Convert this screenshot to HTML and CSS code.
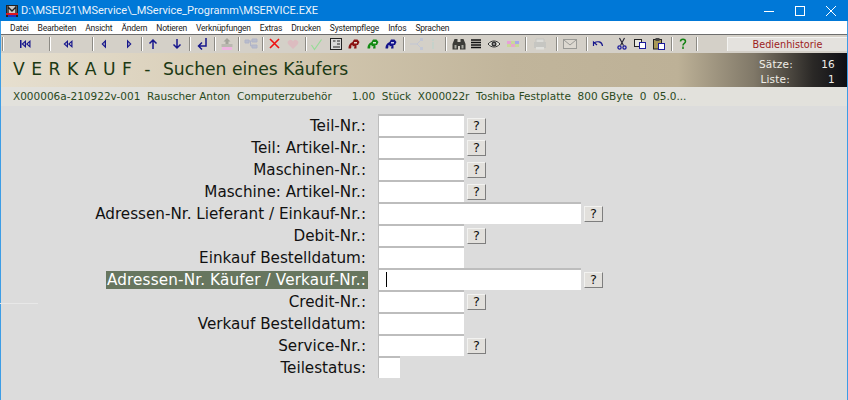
FILE: index.html
```html
<!DOCTYPE html>
<html lang="de">
<head>
<meta charset="utf-8">
<title>MSERVICE</title>
<link rel="stylesheet" href="styles.css">
</head>
<body>
<div class="window">
  <header class="titlebar">
    <svg class="appicon" width="12" height="12" viewBox="0 0 12 12"><rect width="12" height="12" fill="#222"/><rect x="1" y="1" width="10" height="7" fill="#c9c9c9"/><path d="M2 1v7M10 1v7M2 2l4 4 4-4" stroke="#222" stroke-width="1.4" fill="none"/><rect x="0" y="8" width="12" height="2" fill="#e0141c"/><rect x="2" y="10" width="8" height="2" fill="#2430c0"/></svg>
    <span class="titletext">D:\MSEU21\MService\_MService_Programm\MSERVICE.EXE</span>
    <div class="winbtns">
      <svg width="10" height="10" viewBox="0 0 10 10"><path d="M0 5.5h10" stroke="#fff"/></svg>
      <svg width="10" height="10" viewBox="0 0 10 10"><rect x=".5" y=".5" width="9" height="9" fill="none" stroke="#fff"/></svg>
      <svg width="10" height="10" viewBox="0 0 10 10"><path d="M0 0l10 10M10 0L0 10" stroke="#fff"/></svg>
    </div>
  </header>
  <nav class="menubar">
    <span>Datei</span><span>Bearbeiten</span><span>Ansicht</span><span>Ändern</span><span>Notieren</span><span>Verknüpfungen</span><span>Extras</span><span>Drucken</span><span>Systempflege</span><span>Infos</span><span>Sprachen</span>
  </nav>
  <div class="toolbar">
    <i class="sep"></i>
    <svg class="ic" viewBox="0 0 16 16"><path class="navy" d="M3 4h1.500v8H3zM9 4v8L4.500 8zM13.500 4v8L9 8z"/><path class="hole" d="M7.800 6.500v3L6.200 8zM12.300 6.500v3L10.700 8z"/></svg>
    <i class="sep"></i>
    <svg class="ic" viewBox="0 0 16 16"><path class="navy" d="M8 4v8L3.500 8zM12.500 4v8L8 8z"/><path class="hole" d="M6.800 6.500v3L5.200 8zM11.300 6.500v3L9.700 8z"/></svg>
    <i class="sep"></i>
    <svg class="ic" viewBox="0 0 16 16"><path class="navy" d="M10 3.500v9L5.500 8z"/><path class="hole" d="M8.700 6.300v3.400L7.200 8z"/></svg>
    <svg class="ic" viewBox="0 0 16 16"><path class="navy" d="M6 3.500v9L10.500 8z"/><path class="hole" d="M7.300 6.300v3.400L8.800 8z"/></svg>
    <i class="sep"></i>
    <svg class="ic" viewBox="0 0 16 16"><path class="navyline" d="M8 13V4M4.500 7.500L8 4l3.500 3.500"/></svg>
    <svg class="ic" viewBox="0 0 16 16"><path class="navyline" d="M8 3v9M4.500 8.500L8 12l3.500-3.500"/></svg>
    <i class="sep"></i>
    <svg class="ic" viewBox="0 0 16 16"><path class="navyline" d="M12 2v8H5M8 6.500L4.500 10 8 13.500"/></svg>
    <i class="sep"></i>
    <svg class="ic" viewBox="0 0 16 16"><path d="M8 2l3.500 3.500H9.500V9h-3V5.500h-2z" fill="#a4a49c"/><path d="M2.500 8h11v3h-11z" fill="#bab8b0"/><path d="M3 11h10v3H3z" fill="#eeb4e0"/></svg>
    <i class="sep"></i>
    <svg class="ic" viewBox="0 0 16 16"><path d="M2 4h4v3H2zM9 3h5v3H9zM9 9h5v3H9zM6 5h3M7.500 5v5H9" fill="#b8bccc" stroke="#b0b4c8"/></svg>
    <i class="sep"></i>
    <svg class="ic" viewBox="0 0 16 16"><path d="M3 3l9 9M12 3l-9 9" stroke="#ee1111" stroke-width="1.600" fill="none"/></svg>
    <svg class="ic" viewBox="0 0 16 16"><path d="M8 13L3 8a2.600 2.600 0 0 1 5-2.500A2.600 2.600 0 0 1 13 8z" fill="#dcbcc0"/></svg>
    <i class="sep"></i>
    <svg class="ic" viewBox="0 0 16 16"><path d="M2.500 9l3 4.500 7-10" stroke="#96dc96" stroke-width="1.200" fill="none"/></svg>
    <svg class="ic" viewBox="0 0 16 16"><rect x="2.500" y="2.500" width="11" height="11" fill="#d8d8d8" stroke="#222"/><path d="M5 5h2.500M9 5h3M9 8h3M5 11h7" stroke="#222"/></svg>
    <svg class="ic" viewBox="0 0 16 16"><path d="M2.500 12.500C2.500 8 5 7 6.500 6L8 3.500h3.500l2 2.500-1.500 3h-1.500v3.500H8l.5-2.500-3 .5-.5 2z" fill="#8a1414"/><path d="M8 6h3v1.500H8zM5 9.500h2v1H5z" fill="#e4d8cc"/></svg>
    <svg class="ic" viewBox="0 0 16 16"><path d="M2.500 12.500C2.500 8 5 7 6.500 6L8 3.500h3.500l2 2.500-1.500 3h-1.500v3.500H8l.5-2.500-3 .5-.5 2z" fill="#128a14"/><path d="M8 6h3v1.500H8zM5 9.500h2v1H5z" fill="#dcecd0"/></svg>
    <svg class="ic" viewBox="0 0 16 16"><path d="M2.500 12.500C2.500 8 5 7 6.500 6L8 3.500h3.500l2 2.500-1.500 3h-1.500v3.500H8l.5-2.500-3 .5-.5 2z" fill="#14148a"/><path d="M8 6h3v1.500H8zM5 9.500h2v1H5z" fill="#d0d0ec"/></svg>
    <i class="sep"></i>
    <svg class="ic" viewBox="0 0 16 16"><path d="M1 8h7l4-4M8 8l4 4" stroke="#c2c6d4" fill="none"/><path d="M11 2h3v3h-3zM11 11h3v3h-3z" fill="#c2c6d4"/></svg>
    <svg class="ic" viewBox="0 0 16 16"><rect x="7" y="3" width="2" height="2" fill="#c6d2ca"/><rect x="7" y="6" width="2" height="7" fill="#c6d2ca"/></svg>
    <i class="sep"></i>
    <svg class="ic" viewBox="0 0 16 16"><path d="M1.500 13.500V8l2-5h3v3h3V3h3l2 5v5.500h-5.500V10h-2v3.500z" fill="#3c3c38"/><path d="M3.500 9h2v3.500h-2zM10.500 9h2v3.500h-2z" fill="#a8a8a0"/></svg>
    <svg class="ic" viewBox="0 0 16 16"><path d="M3 4h10M3 6.500h10M3 9h10M3 11.500h10" stroke="#111" stroke-width="1.300"/></svg>
    <svg class="ic" viewBox="0 0 16 16"><path d="M2 8c3.500-4 8.500-4 12 0-3.500 4-8.500 4-12 0z" fill="#e8e8e0" stroke="#333"/><circle cx="8" cy="8" r="2.500" fill="#333"/><circle cx="8" cy="8" r=".8" fill="#fff"/></svg>
    <svg class="ic" viewBox="0 0 16 16"><rect x="2" y="5" width="12" height="6" fill="#c8d89a"/><path d="M2 5h4v3H2z" fill="#e8a0d8"/><path d="M10 5h4v3h-4z" fill="#a8a8e8"/><path d="M6 8h4v3H6z" fill="#e8a8c8"/></svg>
    <i class="sep"></i>
    <svg class="ic" viewBox="0 0 16 16"><path d="M4 3h8v4H4z" fill="#dcdcd8" stroke="#c4c4c0"/><path d="M2 6h12v6H2z" fill="#c6c6c2"/><path d="M4 11h8v2.500H4z" fill="#e0e0dc"/></svg>
    <i class="sep"></i>
    <svg class="mail" width="14" height="10" viewBox="0 0 14 10"><rect x=".5" y=".5" width="13" height="9" fill="#dcd8d0" stroke="#9a9a96"/><path d="M1 1l6 5 6-5" fill="none" stroke="#9a9a96"/></svg>
    <i class="sep"></i>
    <svg class="ic" viewBox="0 0 16 16"><path class="navyline thin" d="M3.500 10V6l3.500 3M4 7c3-2 8-2 8.500 3"/></svg>
    <svg class="ic" viewBox="0 0 16 16"><path d="M5.500 2l4 7.500M10.500 2l-4 7.500" stroke="#223" stroke-width="1.100" fill="none"/><circle cx="5.500" cy="11.500" r="1.600" fill="none" stroke="#1a1a9c" stroke-width="1.300"/><circle cx="10.500" cy="11.500" r="1.600" fill="none" stroke="#1a1a9c" stroke-width="1.300"/></svg>
    <svg class="ic" viewBox="0 0 16 16"><rect x="2.500" y="3.500" width="7" height="7" fill="#e8e8e0" stroke="#222"/><rect x="7.500" y="6.500" width="6" height="6" fill="#fff" stroke="#1a1a9c"/></svg>
    <svg class="ic" viewBox="0 0 16 16"><rect x="2.500" y="3.500" width="8" height="9.500" fill="#a89858" stroke="#222"/><rect x="4.500" y="2" width="4" height="3" fill="#444"/><rect x="7.500" y="7.500" width="6" height="6" fill="#fff" stroke="#1a1a9c"/></svg>
    <i class="sep"></i>
    <svg class="ic" viewBox="0 0 16 16"><path d="M5.500 5.500c0-3 5-3 5 0 0 2-2.500 1.800-2.500 4M8 10.500v2.500" stroke="#128212" stroke-width="1.500" fill="none"/></svg>
    <i class="sep"></i>
    <button class="history">Bedienhistorie</button>
  </div>
  <section class="banner">
    <h1 class="heading"><span class="prefix">V E R K A U F  -  </span>Suchen eines Käufers</h1>
    <dl class="stats">
      <dt>Sätze:</dt><dd>16</dd>
      <dt>Liste:</dt><dd>1</dd>
    </dl>
  </section>
  <div class="infostrip">X000006a-210922v-001  Rauscher Anton  Computerzubehör      1.00  Stück  X000022r  Toshiba Festplatte  800 GByte  0  05.0...</div>
  <main class="form">
    <div class="row"><label>Teil-Nr.:</label><div class="field short"></div><button class="help">?</button></div>
    <div class="row"><label>Teil: Artikel-Nr.:</label><div class="field short"></div><button class="help">?</button></div>
    <div class="row"><label>Maschinen-Nr.:</label><div class="field short"></div><button class="help">?</button></div>
    <div class="row"><label>Maschine: Artikel-Nr.:</label><div class="field short"></div><button class="help">?</button></div>
    <div class="row"><label>Adressen-Nr. Lieferant / Einkauf-Nr.:</label><div class="field long"></div><button class="help">?</button></div>
    <div class="row"><label>Debit-Nr.:</label><div class="field short"></div><button class="help">?</button></div>
    <div class="row"><label>Einkauf Bestelldatum:</label><div class="field short"></div></div>
    <div class="row"><label><span class="active">Adressen-Nr. Käufer / Verkauf-Nr.:</span></label><div class="field long"><i class="caret"></i></div><button class="help">?</button></div>
    <div class="row"><label>Credit-Nr.:</label><div class="field short"></div><button class="help">?</button></div>
    <div class="row"><label>Verkauf Bestelldatum:</label><div class="field short"></div></div>
    <div class="row"><label>Service-Nr.:</label><div class="field short"></div><button class="help">?</button></div>
    <div class="row"><label>Teilestatus:</label><div class="field tiny"></div></div>
  </main>
  <i class="glitch"></i>
</div>
</body>
</html>
```
FILE: styles.css
```css
* { box-sizing: border-box; }
html, body { margin: 0; padding: 0; }
body { width: 848px; height: 400px; overflow: hidden; background: #dcdcdc; }
.window {
  position: relative;
  width: 848px;
  height: 400px;
  display: flex;
  flex-direction: column;
  background: #dcdcdc;
  border-left: 1px solid #3c9de6;
  border-right: 1px solid #3c9de6;
  font-family: "DejaVu Sans", sans-serif;
}
.titlebar {
  height: 21px;
  margin: 0 -1px;
  background: #0078d7;
  color: #eaf3fb;
  display: flex;
  align-items: center;
  padding-left: 6px;
  font: 11px "Roboto", sans-serif;
}
.appicon { flex: none; }
.titletext { margin-left: 3px; }
.winbtns { margin-left: auto; display: flex; gap: 21px; padding-right: 12px; }
.menubar {
  height: 13px;
  background: #fff;
  display: flex;
  align-items: center;
  gap: 9px;
  padding-left: 9px;
  font: 8.500px "Roboto", sans-serif;
  letter-spacing: -.2px;
  color: #222;
  white-space: nowrap;
}
.toolbar {
  height: 19px;
  padding-left: 1px;
  border-top: 1px solid #6e6e6e;
  background: #d4d0c8;
  display: grid;
  align-items: center;
  justify-items: start;
  grid-template-columns: 15px 32px 11px 32px 4px 25px 20px 4px 24px 20px 5px 20px 5px 19px 5px 19px 5px 18px 20px 4px 19px 18px 19px 18px 20px 6px 16px 20px 6px 17px 18px 19px 20px 7px 24px 6px 24px 4px 24px 18px 19px 20px 4px 21px 31px 1fr;
}
.sep { display: block; width: 2px; height: 14px; border-left: 1px solid #8c8a84; border-right: 1px solid #fff; }
.ic { width: 16px; height: 16px; display: block; }
.mail { display: block; margin-left: 1px; }
.navy { fill: #16168c; }
.hole { fill: #d4d0c8; }
.navyline { fill: none; stroke: #16168c; stroke-width: 1.500; }
.navyline.thin { stroke-width: 1.200; }
.history {
  width: 120px;
  height: 14px;
  padding: 0;
  background: #e4e2de;
  border: 0;
  border-top: 1px solid #f4f4f2;
  border-left: 1px solid #f4f4f2;
  color: #9c1c1c;
  font: 9.700px/12px "DejaVu Sans", sans-serif;
  display: block;
}
.banner {
  height: 34px;
  background: linear-gradient(90deg, #e6dfcf 0%, #d6cbb4 30%, #c1b59b 60%, #bdb197 80%, #807868 89%, #2a2826 96%, #0e0e14 100%);
  display: flex;
  justify-content: space-between;
  align-items: center;
  padding: 0 12px;
}
.heading {
  margin: 0 0 2px;
  font: 400 17.200px "DejaVu Sans", sans-serif;
  color: #1c3a14;
  white-space: pre;
}
.prefix { letter-spacing: .5px; }
.stats {
  margin: 5px 0 0;
  display: grid;
  grid-template-columns: 31px 45px;
  grid-auto-rows: 14.500px;
  font-size: 10.500px;
  letter-spacing: .2px;
  color: #f0eee8;
}
.stats dt { text-align: right; }
.stats dd { margin: 0; text-align: right; }
.infostrip {
  height: 19px;
  background: #e2e1dc;
  color: #2a4a1c;
  font-size: 10.500px;
  line-height: 19px;
  padding-left: 12px;
  white-space: pre;
}
.form {
  padding-top: 8px;
  display: flex;
  flex-direction: column;
  gap: 1px;
}
.row {
  display: flex;
  align-items: center;
  height: 21px;
}
.row label {
  width: 365px;
  flex: none;
  margin-top: 2px;
  text-align: right;
  font-size: 15.200px;
  line-height: 18px;
  color: #111;
  white-space: nowrap;
}
.active {
  display: inline-block;
  margin-right: -2px;
  padding: 0 2px 0 1px;
  background: #67765f;
  color: #fff;
  letter-spacing: .15px;
}
.field {
  margin-left: 12px;
  height: 22px;
  flex: none;
  background: #fff;
  border-top: 2px solid #bdbdbd;
  border-left: 1px solid #bdbdbd;
  display: flex;
  align-items: center;
  padding-left: 7px;
}
.short { width: 86px; }
.long { width: 203px; }
.tiny { width: 22px; }
.caret { display: block; width: 1px; height: 15px; background: #000; }
.help {
  margin: 2px 0 0 3px;
  width: 19px;
  height: 16px;
  padding: 0;
  background: #e2e0dc;
  border: 1px solid #f2f2f0;
  border-right: 1px solid #7e7e7e;
  border-bottom: 1px solid #7e7e7e;
  font: 13px/13px "DejaVu Sans", sans-serif;
  color: #111;
}
.glitch {
  position: absolute;
  left: -1px;
  top: 303px;
  width: 38px;
  height: 1px;
  background: #e8e8e8;
}
```
